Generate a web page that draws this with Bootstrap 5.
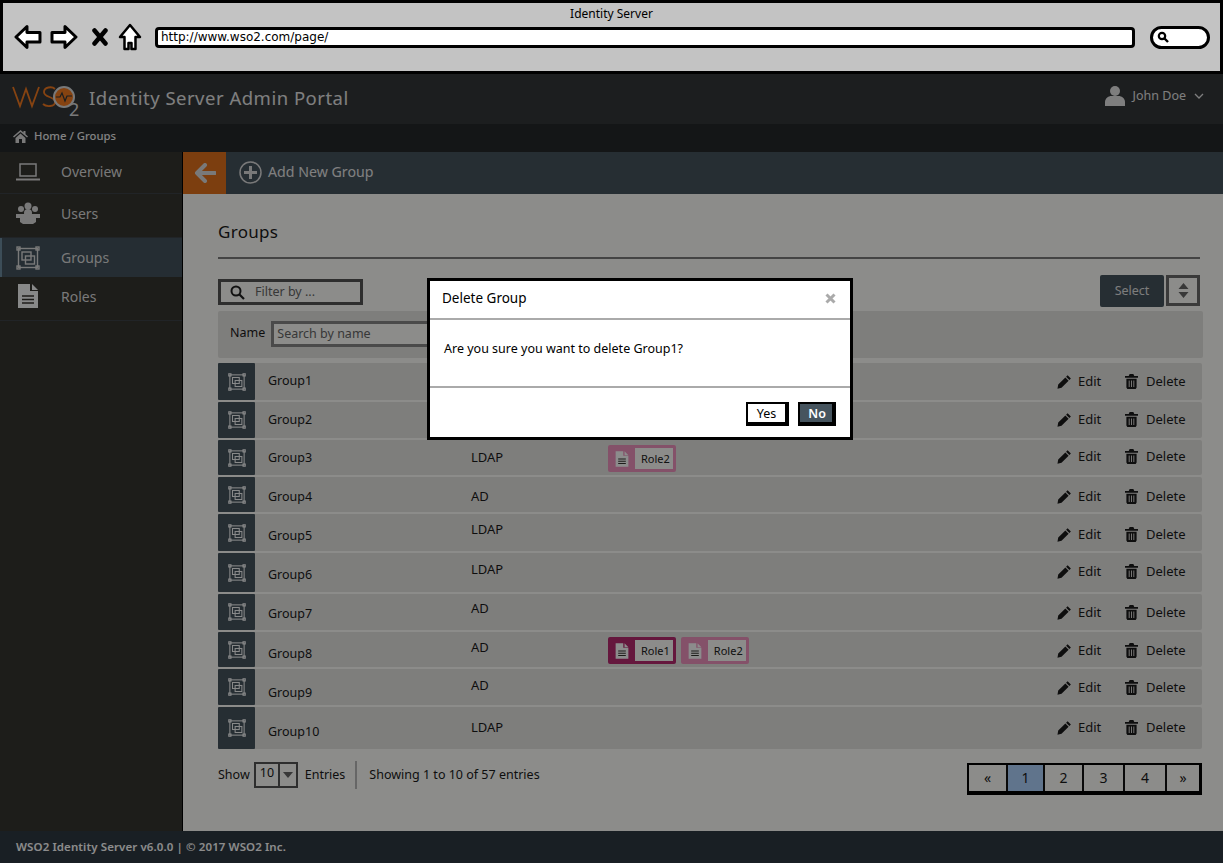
<!DOCTYPE html>
<html lang="en">
<head>
  <meta charset="UTF-8">
  <title>Identity Server Admin Portal - Groups</title>
  <link href="https://cdn.jsdelivr.net/npm/bootstrap@5.3.0/dist/css/bootstrap.min.css" rel="stylesheet">
  <style>
    html, body { height: 100%; overflow: hidden; }
    body { font-family: "Noto Sans", "DejaVu Sans", sans-serif; font-size: 12.5px; background: #fff; color: #1a1a1a; }
    .frame { width: 1223px; height: 863px; }
    .chrome { height: 74px; background: #c3c3c3; border: 3px solid #000; color: #000; }
    .chrome-title { height: 20px; padding-top: 2px; font-size: 12px; line-height: 18px; }
    .chrome-tools { padding-left: 11px; padding-right: 10px; }
    .ico-stop { margin-left: 14px; }
    .ico-home { margin-left: 10px; }
    .url-box { width: 981px; height: 21px; margin-left: 13px; border: 3px solid #000; border-radius: 4px; background: #fff; font-family: "DejaVu Sans", sans-serif; font-size: 12px; line-height: 14px; padding-left: 3px; }
    .search-pill { width: 60px; height: 23px; margin-left: 15px; border: 3px solid #000; border-radius: 12px; background: #fff; }
    .app { height: 789px; }
    .top-bar { height: 50px; background: #33373a; color: #e6e6e6; padding-left: 12px; padding-right: 19px; }
    .brand-text { font-size: 18.5px; letter-spacing: .5px; margin-left: 5px; margin-bottom: 2px; color: #e8e8e8; }
    .user-menu { padding-bottom: 6px; }
    .crumb-bar { height: 28px; background: #25292b; color: #eee; font-size: 11.3px; font-weight: 500; padding-left: 13px; padding-bottom: 4px; gap: 6px; }
    .body-row { height: 679px; }
    .side { width: 183px; background: #363531; color: #ddd; border-right: 1px solid #000; font-size: 14px; }
    .side-item { padding-left: 16px; gap: 21px; border-bottom: 1px solid #3d4347; }
    .side-item svg { width: 24px; flex: none; }
    .side-active { background: #44535e; border-bottom: 0; border-left: 2px solid #6d8ca0; padding-left: 14px; }
    .h-over { height: 42px; padding-bottom: 2px; }
    .h-users { height: 44px; padding-bottom: 5px; }
    .h-groups { height: 39px; }
    .h-roles { height: 44px; padding-bottom: 5px; }
    .main { width: 1040px; background: #fffffb; }
    .action-bar { height: 42px; background: #46545e; color: #e9e9e9; font-size: 14.2px; }
    .back-btn { width: 43px; height: 42px; background: #e2711d; }
    .add-link { gap: 6px; margin-left: 13px; padding-bottom: 2px; }
    .content { padding: 0 21px 0 35px; }
    .page-title { font-size: 17px; height: 36px; margin: 27px 0 0; line-height: 22px; letter-spacing: .3px; font-weight: 400; }
    .title-rule { height: 2px; background: #7d7d7d; margin: 0 2px 20px 0; opacity: 1; border: 0; }
    .filter-box { width: 145px; height: 26px; border: 3px solid #555; background: #fffffb; color: #666; padding-left: 9px; gap: 10px; }
    .select-btn { width: 64px; height: 32px; background: #46545e; color: #e3e3e3; border-radius: 2px; margin-right: 2px; }
    .sort-btn { width: 34px; height: 31px; border: 3px solid #6b6b6b; }
    .right-tools { margin-top: -4px; }
    .tool-row { height: 32px; margin-right: 2px; }
    .search-row { height: 47px; background: #e6e5e2; padding-left: 12px; padding-bottom: 2px; gap: 6px; border-radius: 2px; margin-right: -1px; }
    .search-input { width: 230px; height: 26px; border: 3px solid #888; background: #fffffb; color: #666; padding-left: 3px; line-height: 20px; }
    .group-rows { margin-top: 5px; }
    .grp-row { background: #e6e5e2; margin-bottom: 2px; border-radius: 2px; }
    .grp-icon { width: 37px; background: #46545e; flex: none; border-radius: 1px; }
    .cell-name { width: 216px; padding-left: 13px; flex: none; }
    .cell-store { width: 137px; flex: none; font-size: 13px; }
    .cell-roles { gap: 5px; flex-grow: 1; padding-top: 2px; }
    .cell-edit { width: 68px; gap: 6px; flex: none; font-size: 13px; margin-left: 1px; }
    .cell-del { width: 77px; gap: 8px; flex: none; font-size: 13px; }
    .act-ico { margin-top: 2px; }
    .role-tag { height: 27px; border-radius: 2px; padding: 3px 3px 3px 7px; gap: 6px; font-size: 11px; }
    .role-dark { background: #b82a70; }
    .role-light { background: #f094c0; }
    .role-name { background: #fffffb; height: 21px; line-height: 21px; padding: 0 3px 0 6px; color: #222; }
    .foot-row { height: 48px; }
    .size-box { width: 44px; height: 26px; border: 2px solid #555; margin: 0 7px 0 4px; }
    .size-value { width: 24px; border-right: 2px solid #555; padding-left: 4px; }
    .size-arrow { flex: 1; }
    .size-sep { width: 2px; height: 28px; background: #bbb; margin: 0 12px 0 10px; }
    .pager { height: 32px; margin-top: 7px; border: 2px solid #000; border-bottom-width: 4px; border-right-width: 3px; margin-right: 0; background: #fffffb; }
    .pager-cell { height: 100%; border-right: 2px solid #111; font-size: 14px; color: #1a1a1a; text-align: center; line-height: 26px; }
    .pager-cell:last-child { border-right: 0; }
    .pager-on { background: #b0d4ff; }
    .app-foot { height: 32px; background: #2f3a43; color: #fff; padding-left: 16px; font-size: 11.5px; font-weight: 600; letter-spacing: .1px; }
    .backdrop { background: rgba(0, 0, 0, .45); }
    .dialog-box { left: 427px; top: 204px; width: 426px; height: 162px; background: #fff; border: 3px solid #000; color: #000; }
    .dialog-head { height: 37px; padding: 0 14px 3px 12px; font-size: 13.5px; }
    .dialog-rule { height: 2px; background: #aaa; margin: 0; border: 0; opacity: 1; }
    .dialog-text { height: 66px; padding: 20px 0 0 14px; line-height: 18px; }
    .dialog-foot { height: 52px; padding: 14px 14px 0 0; gap: 9px; }
    .dlg-btn { height: 24px; line-height: 19px; border: 2px solid #000; border-right-width: 4px; border-bottom-width: 4px; padding: 0 9px; }
    .dlg-no { background: #46545e; color: #fff; font-weight: 600; padding: 0 6px 0 8px; }
  </style>
</head>
<body>
<svg width="0" height="0" class="position-absolute">
  <defs>
    <symbol id="ico-group" viewBox="0 0 24 24">
      <g fill="none" stroke="currentColor" stroke-width="1.4">
        <rect x="2.5" y="2.5" width="19" height="19"/>
        <rect x="6" y="6" width="9" height="8"/>
        <rect x="9.5" y="10" width="9" height="8"/>
        <rect x="1" y="1" width="3" height="3"/><rect x="20" y="1" width="3" height="3"/>
        <rect x="1" y="20" width="3" height="3"/><rect x="20" y="20" width="3" height="3"/>
      </g>
    </symbol>
    <symbol id="ico-doc" viewBox="0 0 22 26">
      <path fill="currentColor" d="M1 1h12v7h8v17H1z"/>
      <path fill="currentColor" d="M15 1l6 6h-6z"/>
      <path stroke="var(--doc-line, #363531)" stroke-width="1.6" d="M5 13h12M5 16.5h12M5 20h12"/>
    </symbol>
    <symbol id="ico-pen" viewBox="0 0 16 16">
      <path fill="currentColor" d="M11.3 1.2l3.5 3.5-1.6 1.6-3.5-3.5zM8.9 3.6l3.5 3.5-7.6 7.6-4.3.9.8-4.4z"/>
    </symbol>
    <symbol id="ico-bin" viewBox="0 0 14 16">
      <path fill="currentColor" d="M5 0h4l1 2h4v2H0V2h4zM1.5 5h11v9.5l-1 1.5h-9l-1-1.5zM4 7v7h1V7zm2.500 0v7h1V7zM9 7v7h1V7z" fill-rule="evenodd"/>
    </symbol>
  </defs>
</svg>

<div class="frame d-flex flex-column">
  <div class="chrome">
    <div class="chrome-title text-center">Identity Server</div>
    <div class="chrome-tools d-flex align-items-center">
      <svg width="28" height="26" viewBox="0 0 28 26"><path d="M2 13L13 2.500v6h13v9.500H13v5.500z" fill="#fff" stroke="#000" stroke-width="3" stroke-linejoin="round"/></svg>
      <svg class="ms-2" width="28" height="26" viewBox="0 0 28 26"><path d="M26 13L15 2.500v6H2v9.500h13v5.500z" fill="#fff" stroke="#000" stroke-width="3" stroke-linejoin="round"/></svg>
      <svg class="ico-stop" width="16" height="18" viewBox="0 0 16 18"><path d="M2.500 2.500l11 13M13.500 2.500l-11 13" stroke="#000" stroke-width="4.500" stroke-linecap="round"/></svg>
      <svg class="ico-home" width="24" height="28" viewBox="0 0 24 28"><path d="M12 2L2 14h4.500v12h4v-6h3v6h4V14H22z" fill="#fff" stroke="#000" stroke-width="2.500" stroke-linejoin="round"/></svg>
      <div class="url-box">http://www.wso2.com/page/</div>
      <div class="search-pill d-flex align-items-center ps-1">
        <svg width="12" height="12" viewBox="0 0 12 12"><circle cx="5" cy="5" r="3.200" fill="none" stroke="#000" stroke-width="2.200"/><path d="M7.500 7.500l3.500 3.500" stroke="#000" stroke-width="2.400"/></svg>
      </div>
    </div>
  </div>

  <div class="app position-relative">
    <div class="top-bar d-flex align-items-center justify-content-between">
      <div class="d-flex align-items-center">
        <svg width="72" height="46" viewBox="0 0 72 46">
          <path d="M1 11l7 19 6-17 6 17 7-19" fill="none" stroke="#f47b20" stroke-width="1.800"/>
          <path d="M43 13c-3-3-11-2-11 3 0 6 11 4 11 10 0 5-9 5-12 2" fill="none" stroke="#f47b20" stroke-width="1.800"/>
          <circle cx="52" cy="21" r="10" fill="#f47b20" stroke="#ddd" stroke-width="2"/>
          <path d="M44 21h4l2-4 3 8 2-5h5" fill="none" stroke="#33373a" stroke-width="1.200"/>
          <text x="57" y="40" font-size="18" fill="#ddd" font-family="Noto Sans, sans-serif">2</text>
        </svg>
        <span class="brand-text">Identity Server Admin Portal</span>
      </div>
      <div class="user-menu d-flex align-items-center">
        <svg width="20" height="22" viewBox="0 0 20 22" fill="#e6e6e6"><circle cx="10" cy="6" r="5"/><path d="M0 21v-4c0-4 4-6 6-6h8c2 0 6 2 6 6v4z"/></svg>
        <span class="ms-2">John Doe</span>
        <svg class="ms-2" width="10" height="7" viewBox="0 0 10 7"><path d="M1 1l4 4 4-4" fill="none" stroke="#e6e6e6" stroke-width="1.300"/></svg>
      </div>
    </div>

    <div class="crumb-bar d-flex align-items-center">
      <svg width="15" height="13" viewBox="0 0 15 13" fill="#ddd"><path d="M7.500 0L0 6.500l1 1L7.500 2 14 7.500l1-1-2.500-2.200V1h-2v1.600zM2.500 8v5h3.500V9h3v4h3.500V8L7.500 3.500z"/></svg>
      <span>Home / Groups</span>
    </div>

    <div class="body-row d-flex">
      <div class="side">
        <div class="side-item h-over d-flex align-items-center">
          <svg height="18" viewBox="0 0 24 18" fill="none" stroke="#ddd" stroke-width="1.500"><rect x="4" y="1" width="16" height="12"/><path d="M0 16.500h24" stroke-width="2"/></svg>
          <span>Overview</span>
        </div>
        <div class="side-item h-users d-flex align-items-center">
          <svg height="22" viewBox="0 0 24 22" fill="#ddd"><circle cx="5" cy="7" r="3"/><circle cx="19" cy="7" r="3"/><circle cx="12" cy="4" r="3.500"/><circle cx="12" cy="11" r="4"/><path d="M0 12h24v4H0z"/><path d="M4 15h16v5l-3 2H7l-3-2z"/></svg>
          <span>Users</span>
        </div>
        <div class="side-item side-active h-groups d-flex align-items-center">
          <svg height="24"><use href="#ico-group"/></svg>
          <span>Groups</span>
        </div>
        <div class="side-item h-roles d-flex align-items-center">
          <svg height="26" class="text-light"><use href="#ico-doc"/></svg>
          <span>Roles</span>
        </div>
      </div>

      <div class="main">
        <div class="action-bar d-flex align-items-center">
          <div class="back-btn d-flex align-items-center justify-content-center">
            <svg width="22" height="20" viewBox="0 0 22 20"><path d="M11 2l-8 8 8 8M3 10h18" fill="none" stroke="#ddd" stroke-width="4" stroke-linecap="round" stroke-linejoin="round"/></svg>
          </div>
          <div class="add-link d-flex align-items-center">
            <svg width="23" height="23" viewBox="0 0 23 23"><circle cx="11.500" cy="11.500" r="10.500" fill="none" stroke="#ddd" stroke-width="1.500"/><path d="M11.500 5v13M5 11.500h13" stroke="#ddd" stroke-width="3"/></svg>
            <span>Add New Group</span>
          </div>
        </div>

        <div class="content">
          <h1 class="page-title">Groups</h1>
          <hr class="title-rule">
          <div class="tool-row d-flex align-items-start justify-content-between">
            <div class="filter-box d-flex align-items-center">
              <svg width="15" height="15" viewBox="0 0 15 15"><circle cx="6" cy="6" r="4.500" fill="none" stroke="#222" stroke-width="2"/><path d="M9.500 9.500l4.500 4.500" stroke="#222" stroke-width="2.200"/></svg>
              <span>Filter by ...</span>
            </div>
            <div class="right-tools d-flex">
              <div class="select-btn d-flex align-items-center justify-content-center">Select</div>
              <div class="sort-btn d-flex align-items-center justify-content-center">
                <svg width="11" height="15" viewBox="0 0 11 15" fill="#666"><path d="M5.500 0l5 6H.5zM5.500 15l5-6H.5z"/></svg>
              </div>
            </div>
          </div>
          <div class="search-row d-flex align-items-center">
            <span>Name</span>
            <div class="search-input">Search by name</div>
          </div>
          <div class="group-rows" id="groupRows"></div>
          <div class="foot-row d-flex align-items-center justify-content-between">
            <div class="d-flex align-items-center">
              <span>Show</span>
              <div class="size-box d-flex">
                <div class="size-value">10</div>
                <div class="size-arrow d-flex align-items-center justify-content-center">
                  <svg width="10" height="6" viewBox="0 0 10 6" fill="#666"><path d="M0 0h10L5 6z"/></svg>
                </div>
              </div>
              <span>Entries</span>
              <div class="size-sep"></div>
              <span>Showing 1 to 10 of 57 entries</span>
            </div>
            <div class="pager d-flex" id="pager"></div>
          </div>
        </div>
      </div>
    </div>

    <div class="app-foot d-flex align-items-center">WSO2 Identity Server v6.0.0 | © 2017 WSO2 Inc.</div>

    <div class="backdrop position-absolute top-0 start-0 w-100 h-100"></div>
    <div class="dialog-box position-absolute">
      <div class="dialog-head d-flex align-items-center justify-content-between">
        <span>Delete Group</span>
        <svg width="11" height="11" viewBox="0 0 11 11"><path d="M1.500 1.500l8 8M9.500 1.500l-8 8" stroke="#aaa" stroke-width="3"/></svg>
      </div>
      <hr class="dialog-rule">
      <div class="dialog-text">Are you sure you want to delete Group1?</div>
      <hr class="dialog-rule">
      <div class="dialog-foot d-flex justify-content-end">
        <div class="dlg-btn">Yes</div>
        <div class="dlg-btn dlg-no">No</div>
      </div>
    </div>
  </div>
</div>

<script>
  // h = row height, n/s/a = text offset of name, store and action cells
  const groups = [
    { name: "Group1", store: "", roles: [], h: 37, n: 9, a: 9 },
    { name: "Group2", store: "", roles: [], h: 36, n: 9, a: 8 },
    { name: "Group3", store: "LDAP", roles: ["Role2"], h: 35, n: 9, s: 8, a: 7 },
    { name: "Group4", store: "AD", roles: [], h: 35, n: 11, s: 10, a: 10 },
    { name: "Group5", store: "LDAP", roles: [], h: 37, n: 13, s: 6, a: 11 },
    { name: "Group6", store: "LDAP", roles: [], h: 39, n: 13, s: 7, a: 9 },
    { name: "Group7", store: "AD", roles: [], h: 36, n: 11, s: 5, a: 9 },
    { name: "Group8", store: "AD", roles: ["Role1", "Role2"], h: 35, n: 13, s: 6, a: 9 },
    { name: "Group9", store: "AD", roles: [], h: 36, n: 15, s: 7, a: 9 },
    { name: "Group10", store: "LDAP", roles: [], h: 42, n: 16, s: 11, a: 11 }
  ];

  function roleTag(role) {
    let tone = role === "Role1" ? "role-dark" : "role-light";
    return `<div class="role-tag d-flex ${tone}">
      <svg width="14" height="20" class="text-white align-self-center"><use href="#ico-doc"/></svg>
      <div class="role-name">${role}</div>
    </div>`;
  }

  document.getElementById("groupRows").innerHTML = groups.map(g => `
    <div class="grp-row d-flex" style="height:${g.h}px">
      <div class="grp-icon d-flex align-items-center justify-content-center text-light">
        <svg width="18" height="18"><use href="#ico-group"/></svg>
      </div>
      <div class="cell-name" style="padding-top:${g.n}px">${g.name}</div>
      <div class="cell-store" style="padding-top:${g.s || 0}px">${g.store}</div>
      <div class="cell-roles d-flex align-items-center">${g.roles.map(roleTag).join("")}</div>
      <div class="cell-edit d-flex align-items-start" style="padding-top:${g.a}px">
        <svg width="15" height="15" class="act-ico"><use href="#ico-pen"/></svg><span>Edit</span>
      </div>
      <div class="cell-del d-flex align-items-start" style="padding-top:${g.a}px">
        <svg width="13" height="15" class="act-ico"><use href="#ico-bin"/></svg><span>Delete</span>
      </div>
    </div>`).join("");

  const pages = [["«", 39], ["1", 37], ["2", 39], ["3", 41], ["4", 42], ["»", 32]];
  document.getElementById("pager").innerHTML = pages.map(p => `
    <div class="pager-cell ${p[0] === "1" ? "pager-on" : ""}" style="width:${p[1]}px">${p[0]}</div>`).join("");
</script>
<script src="https://cdn.jsdelivr.net/npm/bootstrap@5.3.0/dist/js/bootstrap.bundle.min.js"></script>
</body>
</html>
